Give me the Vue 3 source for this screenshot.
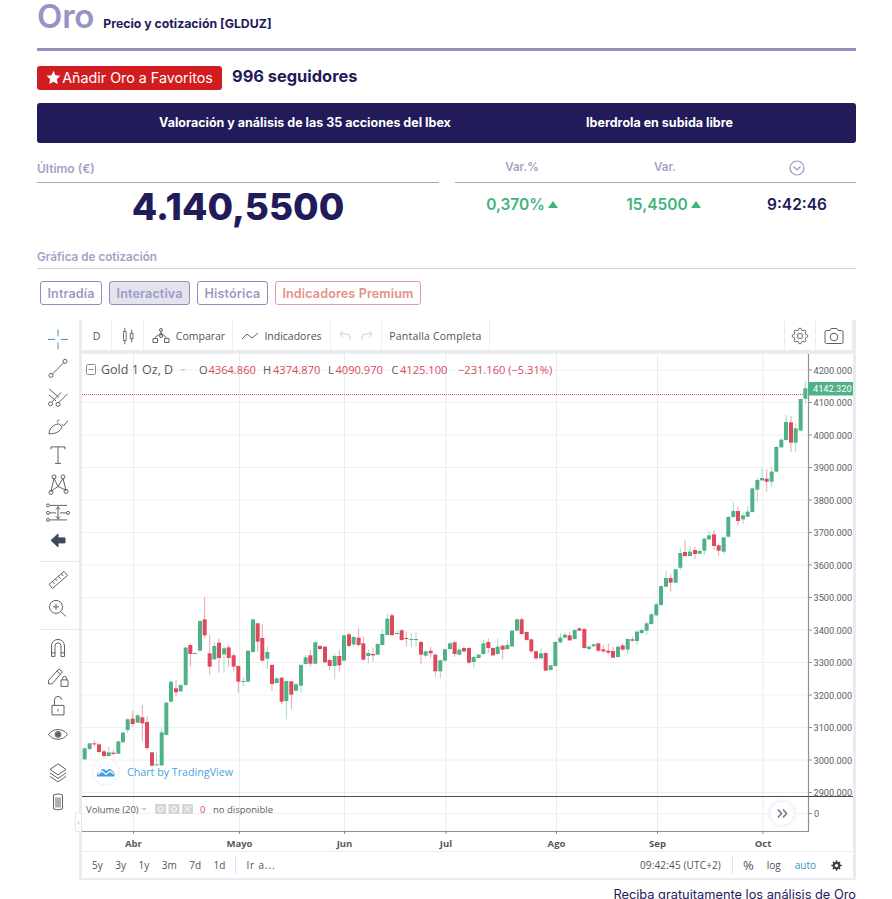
<script setup>
const rowsA = `14 g 475 508 472 510
29 g 460 477 458 480
43 r 460 463 450 470
57 r 463 486 460 490
72 r 484 498 480 505
86 g 487 498 470 500
100 r 488 492 480 495
115 g 454 491 452 492
129 g 428 457 425 460
143 g 388 420 385 430
158 r 386 402 362 410
173 g 376 398 372 400
187 r 382 400 345 455
201 r 396 474 378 480
216 r 487 527 486 530
230 g 523 526 487 527
245 g 427 526 415 528
259 g 338 435 335 436
273 g 275 335 272 338
288 r 295 307 270 318
302 g 285 304 283 306
317 g 173 285 170 288
331 r 165 192 160 230
345 g 189 191 188 192
360 g 93 182 90 185
374 r 88 136 22 145
389 r 190 230 135 255
403 g 168 208 155 210
417 r 158 204 145 248
432 g 175 193 170 248
446 r 172 204 165 232
461 r 196 230 190 245
475 r 228 275 225 308
490 g 273 275 262 290
504 g 182 275 180 276
519 g 88 186 86 188
533 r 100 155 98 185
547 r 144 212 102 215
562 g 186 206 170 236
576 r 225 282 222 303
590 g 265 279 263 281
605 r 263 335 262 342
619 g 273 333 272 388
634 r 274 314 272 358
648 g 283 302 280 304
663 g 225 287 222 308
677 g 202 222 195 224
691 r 196 221 180 230
706 g 157 221 152 224
720 r 168 177 165 180
735 r 170 217 168 220
749 r 210 228 205 240
764 g 198 228 190 268
778 r 198 226 180 245`

const rowsB = `12 g 136 212 134 214
27 r 133 168 128 172
41 g 141 163 139 170
56 r 143 165 115 170
70 r 160 209 140 212
85 g 189 198 178 220
99 r 192 196 172 215
113 g 162 194 158 196
127 g 132 165 118 167
142 g 86 135 72 137
156 r 76 135 70 140
171 g 129 131 122 135
185 r 121 150 118 152
199 r 144 147 125 170
214 g 147 149 130 172
228 g 147 149 126 170
243 r 156 194 152 222
257 g 184 197 180 202
272 r 182 190 170 205
286 r 194 244 190 260
301 g 211 244 208 265
315 g 178 212 175 215
330 g 160 177 155 179
344 r 157 192 152 200
358 g 179 194 176 196
372 r 174 184 170 188
387 r 174 218 172 222
401 g 201 216 198 232
416 g 194 204 192 206
430 g 160 192 150 194
445 r 156 174 145 190
459 r 174 196 172 198
473 g 170 192 145 194
488 r 167 179 165 207
502 g 165 177 150 180
516 g 122 169 120 172
531 g 88 122 86 124
545 r 88 132 82 134
560 r 126 150 124 152
574 r 148 184 146 190
588 r 184 205 182 210
603 g 190 205 175 207
617 r 189 242 187 244
632 g 226 240 224 242
646 g 156 228 154 230
661 g 143 157 130 160
675 g 134 143 128 145
689 r 136 151 125 153
704 g 120 147 118 149
718 r 115 122 112 124
733 r 117 174 115 176
747 g 170 177 165 180
761 g 163 169 160 172
775 r 160 182 158 186`

const rowsC = `10 r 808 814 795 820
25 r 812 818 790 822
39 r 813 833 800 835
54 g 800 831 797 833
68 r 796 809 790 812
83 g 777 809 775 822
97 r 778 782 770 785
111 g 755 783 752 795
125 g 750 759 745 762
140 g 730 752 725 765
154 g 703 732 698 735
169 g 673 706 668 708
183 g 618 675 616 677
198 g 594 620 572 622
212 r 594 608 582 635
227 g 568 608 565 610
241 g 519 563 505 570
255 r 516 528 480 530
270 g 515 528 500 530
285 r 510 522 500 538
299 g 513 521 510 523
313 g 476 512 472 525
327 g 466 478 455 480
342 r 463 498 450 510
356 r 496 512 490 527
371 g 472 515 470 522
385 g 411 470 408 472
400 g 393 411 368 413
414 r 393 423 380 436
429 g 406 418 398 432
443 g 395 410 378 412
457 g 325 396 322 398
472 g 300 329 292 365
486 g 294 301 265 304
500 r 296 305 268 335
515 g 275 305 262 320
529 g 201 275 198 278
544 g 179 202 175 204
558 g 126 180 105 182
573 r 127 188 108 216
587 g 145 188 130 216
602 g 57 152 55 154
616 g 25 56 3 70`

const parse = (x0, y0, rows) =>
  rows.split('\n').map((line) => {
    const [zx, t, bt, bb, wt, wb] = line.trim().split(' ')
    return {
      x: x0 + zx / 3,
      color: t === 'g' ? '#4fb286' : '#dd4a5e',
      top: y0 + bt / 3,
      h: Math.max(1, (bb - bt) / 3),
      wt: y0 + wt / 3,
      wb: y0 + wb / 3,
    }
  })

const candles = [
  ...parse(80, 590, rowsA),
  ...parse(340, 590, rowsB),
  ...parse(600, 380, rowsC),
]

const priceLabels = [4200, 4100, 4000, 3900, 3800, 3700, 3600, 3500, 3400, 3300, 3200, 3100, 3000, 2900].map(
  (p) => ({ y: 370 + (4200 - p) * 0.325, text: p.toFixed(3) })
)
const months = [
  { x: 133.5, t: 'Abr' },
  { x: 239.5, t: 'Mayo' },
  { x: 344.5, t: 'Jun' },
  { x: 446, t: 'Jul' },
  { x: 556.5, t: 'Ago' },
  { x: 657.5, t: 'Sep' },
  { x: 763, t: 'Oct' },
]
const legend = [
  { x: 199, t: 'O', c: '#555' },
  { x: 208.5, t: '4364.860', c: '#d8495e' },
  { x: 263, t: 'H', c: '#555' },
  { x: 273, t: '4374.870', c: '#d8495e' },
  { x: 328, t: 'L', c: '#555' },
  { x: 335.5, t: '4090.970', c: '#d8495e' },
  { x: 391.5, t: 'C', c: '#555' },
  { x: 400, t: '4125.100', c: '#d8495e' },
  { x: 458, t: '−231.160 (−5.31%)', c: '#d8495e' },
]

const gear = (cx, cy, r1, r2, n) => {
  const pts = []
  for (let i = 0; i < n; i++) {
    const a = (i / n) * Math.PI * 2
    const w = Math.PI / n / 1.9
    ;[[a - w * 1.3, r1], [a - w * 0.6, r2], [a + w * 0.6, r2], [a + w * 1.3, r1]].forEach(([an, r]) =>
      pts.push(`${(cx + r * Math.cos(an)).toFixed(2)} ${(cy + r * Math.sin(an)).toFixed(2)}`)
    )
  }
  return 'M' + pts.join('L') + 'Z'
}
const gearLine = gear(12, 12, 6.5, 8.5, 8)
const gearSolid = gear(8, 8, 4.6, 6.4, 8)

const toolGroups = [
  [
    { d: 'M12 2v7M12 15v7M2 12h7M15 12h7', c: '#3e93bd' },
    { d: 'M6.5 17.5L17.5 6.5M7 19a2 2 0 1 1-4 0a2 2 0 1 1 4 0ZM21 5a2 2 0 1 1-4 0a2 2 0 1 1 4 0Z' },
    { d: 'M3 3.5L13 12M3 9.5L10 15.5M6 16.5L15 7M13 17L21.5 8.5M6.5 18.5a2 2 0 1 1-4 0a2 2 0 1 1 4 0ZM14 19a2 2 0 1 1-4 0a2 2 0 1 1 4 0Z' },
    { d: 'M3 20.5C3 15 8 10.5 13 10.5L16 13.5C14.5 18 10 20.5 3 20.5ZM15.5 10.5L17.5 12.5L22 7M11 9L13 6' },
    { d: 'M5 7V4.5H19V7M12 4.5V21M9 21H15' },
    { d: 'M5 20L8 7L12 15L17 7L20 19L12 15L5 20ZM7 21a2 2 0 1 1-4 0a2 2 0 1 1 4 0ZM10 5.500a2 2 0 1 1-4 0a2 2 0 1 1 4 0ZM19 5.500a2 2 0 1 1-4 0a2 2 0 1 1 4 0ZM22 20a2 2 0 1 1-4 0a2 2 0 1 1 4 0Z' },
    { d: 'M4 5H21M4 12.500H10M14 12.500H20M4 19.500H21M12 6V19M10 9L12 6.500L14 9M10 16L12 18.500L14 16M3.500 5a1.500 1.500 0 1 1-3 0a1.500 1.500 0 1 1 3 0ZM3.500 12.500a1.500 1.500 0 1 1-3 0a1.500 1.500 0 1 1 3 0ZM3.500 19.500a1.500 1.500 0 1 1-3 0a1.500 1.500 0 1 1 3 0ZM23.500 12.500a1.500 1.500 0 1 1-3 0a1.500 1.500 0 1 1 3 0Z' },
    { d: 'M5 12L12 5.500V9.500H19V14.500H12V18.500Z', fill: '#3d4a5c', c: '#3d4a5c' },
  ],
  [
    { d: 'M3 17L18 4L21.500 8L6.500 21ZM6.500 14L8.500 16.500M9.500 11.500L11 13.500M12.500 9L14.500 11.500M15.500 6.500L17 8.500' },
    { d: 'M16.500 10.500a6.500 6.500 0 1 1-13 0a6.500 6.500 0 1 1 13 0ZM15 15.500L20 20M10 7.500V13.500M7 10.500H13' },
  ],
  [
    { d: 'M5.500 21V10.500a6.500 6.500 0 0 1 13 0V21H15V10.500a3 3 0 0 0-6 0V21ZM5.500 17.500H9M15 17.500H18.500' },
    { d: 'M2.500 16L13 4.500L16.500 7.500L6 19.500H2.500ZM11 6.500L14.500 10M15 15.500H22V22H15ZM16.500 15.500V14a2 2 0 0 1 4 0v1.500' },
    { d: 'M6 12H18V21.500H6ZM8.500 12V6.500a3.500 3.500 0 0 1 7 0M12 15.500V18' },
    { d: 'M2.500 12C7 5.500 17 5.500 21.500 12C17 18.500 7 18.500 2.500 12ZM15 12a3 3 0 1 1-6 0a3 3 0 1 1 6 0Z', dot: true },
  ],
  [
    { d: 'M12 3.500L20 9L12 14.500L4 9ZM4 12.500L12 18L20 12.500M4 16L12 21.500L20 16' },
    { d: 'M7.500 5.500Q12 3.500 16.500 5.500V19.500Q12 21.500 7.500 19.500ZM10 8V18M12 8V18M14 8V18' },
  ],
]
const ranges = ['5y', '3y', '1y', '3m', '7d', '1d']
</script>

<template>
  <div class="page">
    <header class="title-row">
      <h1 class="title">Oro</h1>
      <h2 class="subtitle">Precio y cotización [GLDUZ]</h2>
    </header>

    <div class="fav-row">
      <button class="fav-btn">
        <svg class="star" viewBox="0 0 16 16" width="15" height="15">
          <path d="M8 .8l2.2 4.700 5.100.7-3.700 3.600.9 5.100L8 12.500l-4.500 2.400.9-5.100L.7 6.200l5.100-.7z" fill="#fff" />
        </svg>
        <span>Añadir Oro a Favoritos</span>
      </button>
      <span class="followers">996 seguidores</span>
    </div>

    <nav class="banner">
      <a>Valoración y análisis de las 35 acciones del Ibex</a>
      <a>Iberdrola en subida libre</a>
    </nav>

    <section class="quote">
      <div class="last">
        <div class="q-head q-last">Último (€)</div>
        <div class="price">4.140,5500</div>
      </div>
      <div class="vars">
        <div class="q-head vars-head">
          <span>Var.%</span>
          <span>Var.</span>
          <svg viewBox="0 0 16 16" width="16" height="16" class="clock">
            <circle cx="8" cy="8" r="7" fill="none" stroke="#9b99c2" stroke-width="1.200" />
            <path d="M4.500 6.500L8 10L11.500 6.500" fill="none" stroke="#9b99c2" stroke-width="1.200" />
          </svg>
        </div>
        <div class="vars-body">
          <span class="up">0,370%<i class="tri"></i></span>
          <span class="up second">15,4500<i class="tri"></i></span>
          <span class="time">9:42:46</span>
        </div>
      </div>
    </section>

    <div class="section-label">Gráfica de cotización</div>

    <div class="tabs">
      <a class="tab">Intradía</a>
      <a class="tab active">Interactiva</a>
      <a class="tab">Histórica</a>
      <a class="tab premium">Indicadores Premium</a>
    </div>

    <div class="widget">
      <aside class="tools">
        <div v-for="(group, g) in toolGroups" :key="g" class="tool-group" :class="'g' + g">
          <svg v-for="(ic, i) in group" :key="i" class="tool" viewBox="0 0 24 24" width="24" height="24">
            <path :d="ic.d" :fill="ic.fill || 'none'" :stroke="ic.c || '#5c6168'" stroke-width="1" />
            <circle v-if="ic.dot" cx="12" cy="12" r="2.500" fill="#5c6168" />
          </svg>
        </div>
      </aside>

      <div class="main">
        <div class="topbar">
          <div class="seg" style="width: 30px">D</div>
          <div class="seg" style="width: 32px">
            <svg viewBox="0 0 24 24" width="22" height="22">
              <path d="M7 7H10V17H7ZM8.500 3V7M8.500 17V21M14.500 9H17.500V15H14.500ZM16 5V9M16 15V19" fill="none" stroke="#5c6168" />
            </svg>
          </div>
          <div class="seg" style="width: 89px">
            <svg viewBox="0 0 20 18" width="20" height="18">
              <path d="M10 3V8M10 6L4 10.500M10 6L15.500 10.500M2 11.500H6.500V15.500H2ZM13.500 11.500H18V15.500H13.500Z" fill="none" stroke="#5c6168" />
              <circle cx="10" cy="3" r="1.500" fill="#fff" stroke="#5c6168" />
              <circle cx="10" cy="9" r="1.500" fill="#fff" stroke="#5c6168" />
            </svg>
            <span class="ml">Comparar</span>
          </div>
          <div class="seg" style="width: 98px">
            <svg viewBox="0 0 18 12" width="18" height="12">
              <path d="M1 9L6 4L11 8L17 3" fill="none" stroke="#5c6168" />
            </svg>
            <span class="ml">Indicadores</span>
          </div>
          <div class="seg undo" style="width: 51px">
            <svg viewBox="0 0 14 14" width="14" height="14">
              <path d="M5 2L2 5L5 8M2 5H8.500A3.500 3.500 0 0 1 12 8.500V11" fill="none" stroke="#c9cdd2" />
            </svg>
            <svg viewBox="0 0 14 14" width="14" height="14">
              <path d="M9 2L12 5L9 8M12 5H5.500A3.500 3.500 0 0 0 2 8.500V11" fill="none" stroke="#c9cdd2" />
            </svg>
          </div>
          <div class="seg full" style="width: 108px">Pantalla Completa</div>
          <div class="spacer"></div>
          <div class="seg right" style="width: 32px">
            <svg viewBox="0 0 24 24" width="22" height="22">
              <path :d="gearLine" fill="none" stroke="#5c6168" />
              <circle cx="12" cy="12" r="2.800" fill="none" stroke="#5c6168" />
            </svg>
          </div>
          <div class="seg" style="width: 37px">
            <svg viewBox="0 0 20 18" width="20" height="18">
              <path d="M2.500 3.500H6L7.200 1.500H12.800L14 3.500H17.500A1.500 1.500 0 0 1 19 5V15A1.500 1.500 0 0 1 17.500 16.500H2.500A1.500 1.500 0 0 1 1 15V5A1.500 1.500 0 0 1 2.500 3.500Z" fill="none" stroke="#5c6168" />
              <circle cx="10" cy="10" r="3.800" fill="none" stroke="#5c6168" />
            </svg>
          </div>
        </div>

        <svg class="chart" viewBox="82 354 771 497" width="771" height="497">
          <g stroke="#eef0f4" stroke-width="1">
            <path v-for="l in priceLabels" :key="l.text" :d="`M82 ${l.y}H808`" />
            <path d="M82 813.500H808" />
          </g>
          <g stroke="#e9ecf0" stroke-width="1">
            <path v-for="m in months" :key="m.t" :d="`M${m.x} 354V831`" />
          </g>

          <line x1="82" x2="808" y1="394.500" y2="394.500" stroke="#e0586c" stroke-width="1" stroke-dasharray="1 1" />

          <g v-for="(c, i) in candles" :key="i">
            <line :x1="c.x" :x2="c.x" :y1="c.wt" :y2="c.wb" :stroke="c.color" stroke-width="1" opacity="0.5" />
            <rect :x="c.x - 2" :y="c.top" width="4" :height="c.h" :fill="c.color" />
          </g>

          <!-- axes -->
          <path d="M808.500 354V831.500H82" fill="none" stroke="#8d9094" stroke-width="1.200" />
          <path d="M82 796.500H853" stroke="#4a4c50" stroke-width="1" />
          <g stroke="#8d9094">
            <path v-for="l in priceLabels" :key="'t' + l.text" :d="`M808 ${l.y}h4`" />
            <path d="M808 813.500h4" />
            <path v-for="m in months" :key="'t' + m.t" :d="`M${m.x} 831v3`" />
          </g>
          <g class="axis-text">
            <text v-for="l in priceLabels" :key="'l' + l.text" x="813.500" :y="l.y + 3.500">{{ l.text }}</text>
            <text x="814" y="817">0</text>
          </g>
          <rect x="808" y="382" width="45" height="13.500" fill="#4fb286" />
          <text x="813" y="392.200" class="axis-text current">4142.320</text>
          <g class="month-text">
            <text v-for="m in months" :key="'m' + m.t" :x="m.x" y="847" text-anchor="middle">{{ m.t }}</text>
          </g>

          <!-- legend -->
          <rect x="86.500" y="364.500" width="9" height="10" rx="1" fill="#fff" stroke="#8a8d92" />
          <path d="M88.500 369.500h5" stroke="#8a8d92" />
          <text x="101" y="373.500" class="legend-title">Gold 1 Oz, D</text>
          <path d="M180 369h6l-3 2z" fill="#c5c8cc" />
          <text v-for="l in legend" :key="l.x" :x="l.x" y="373.500" class="legend" :fill="l.c">{{ l.t }}</text>

          <!-- watermark -->
          <circle cx="105.700" cy="771.700" r="13.500" fill="#fff" stroke="#f1efee" />
          <path d="M97 776.500Q96.500 772.500 100 772Q102 767.500 105 769.800L106.500 771Q109.500 767.500 112 770.500Q115 772 114.500 776.500Z" fill="#3f9fe0" />
          <path d="M98 774.500L102 771L106 774.500L110 771L113.500 774" fill="none" stroke="#fff" stroke-width="1.100" />
          <text x="127" y="775.500" class="brand">Chart by TradingView</text>

          <!-- volume legend -->
          <text x="86" y="812.500" class="vol">Volume (20)</text>
          <path d="M141 808h6l-3 2.500z" fill="#c5c8cc" />
          <g fill="#d4d6d9">
            <rect x="155" y="804" width="11" height="10" />
            <rect x="168.500" y="804" width="11" height="10" />
            <rect x="182" y="804" width="11" height="10" />
          </g>
          <g fill="none" stroke="#fff">
            <circle cx="160.500" cy="809" r="2.500" />
            <circle cx="174" cy="809" r="2.500" />
            <path d="M184.500 806L190.500 812M190.500 806L184.500 812" />
          </g>
          <text x="200" y="813" class="vol" style="fill: #d8495e">0</text>
          <text x="213" y="813" class="vol">no disponible</text>

          <!-- go to realtime -->
          <circle cx="782" cy="813.500" r="12" fill="#fff" stroke="#f0f1f3" style="filter: drop-shadow(0 0 2px #e6e8eb)" />
          <path d="M778 809.500L781.500 813.500L778 817.500M783 809.500L786.500 813.500L783 817.500" fill="none" stroke="#6d7a95" stroke-width="1.600" />
        </svg>

        <div class="botbar">
          <div class="ranges">
            <span v-for="r in ranges" :key="r">{{ r }}</span>
          </div>
          <div class="vsep"></div>
          <span class="goto">Ir a...</span>
          <div class="spacer"></div>
          <span class="clocktext">09:42:45 (UTC+2)</span>
          <div class="vsep sep2"></div>
          <span class="pct">%</span>
          <span class="log">log</span>
          <span class="auto">auto</span>
          <svg viewBox="0 0 16 16" width="13" height="13" class="gearb">
            <path :d="gearSolid" fill="#3c3f44" />
            <circle cx="8" cy="8" r="2" fill="#fff" />
          </svg>
        </div>
      </div>

      <div class="collapse">‹</div>
    </div>

    <p class="footer">Reciba gratuitamente los análisis de Oro</p>
  </div>
</template>

<style>
html,
body {
  margin: 0;
  background: #fff;
  overflow: hidden;
}
</style>

<style scoped>
.page {
  width: 892px;
  height: 899px;
  box-sizing: border-box;
  padding: 0 36px 0 37px;
  overflow: hidden;
  font-family: Inter, "Noto Sans", sans-serif;
  color: #221b5a;
}
.title-row {
  display: flex;
  align-items: baseline;
  gap: 9px;
  height: 48px;
  border-bottom: 3px solid #918fbf;
  box-sizing: content-box;
}
.title {
  margin: 0;
  font-size: 33px;
  line-height: 33px;
  font-weight: 600;
  color: #9694c4;
  letter-spacing: -0.2px;
}
.subtitle {
  margin: 0;
  font-size: 12.3px;
  font-weight: 700;
  color: #221b5a;
}
.fav-row {
  display: flex;
  align-items: center;
  gap: 10px;
  margin-top: 15px;
  height: 24px;
}
.fav-btn {
  display: flex;
  align-items: center;
  justify-content: center;
  gap: 1px;
  width: 185px;
  height: 24px;
  padding: 0 0 2px;
  border: 0;
  border-radius: 3px;
  background: #d11d20;
  color: #fff;
  font: 400 14.3px Inter, sans-serif;
}
.star {
  flex: none;
}
.followers {
  padding-bottom: 4px;
  font-size: 16.4px;
  font-weight: 700;
}
.banner {
  display: grid;
  grid-template-columns: 536px 173px;
  align-items: center;
  box-sizing: border-box;
  height: 40px;
  padding-bottom: 2px;
  margin-top: 13px;
  background: #221b5a;
  border-radius: 3px;
  color: #fff;
  font-size: 12.5px;
  font-weight: 700;
  text-align: center;
}
.quote {
  display: grid;
  grid-template-columns: 402px 401px;
  gap: 16px;
  margin-top: 12px;
}
.q-head {
  box-sizing: border-box;
  height: 28px;
  padding-top: 4px;
  line-height: 17px;
  border-bottom: 1px solid #aaaab4;
  font-size: 11.5px;
  font-weight: 600;
  color: #a3a1c6;
}
.q-last {
  padding-top: 5px;
  font-size: 12px;
}
.price {
  height: 46px;
  line-height: 47px;
  text-align: center;
  font-size: 37px;
  font-weight: 800;
  color: #221b5a;
}
.vars-head,
.vars-body {
  display: grid;
  grid-template-columns: 134px 152px 112px;
  justify-items: center;
  align-items: center;
}
.vars-head {
  align-items: start;
}
.vars-body {
  box-sizing: border-box;
  height: 46px;
  padding-bottom: 4px;
  font-size: 15.5px;
  font-weight: 600;
}
.clock {
  margin-top: 1px;
}
.up {
  display: flex;
  align-items: center;
  gap: 3px;
  color: #3fb57c;
}
.second {
  margin-right: 3px;
}
.tri {
  width: 0;
  height: 0;
  border-left: 5.5px solid transparent;
  border-right: 5.5px solid transparent;
  border-bottom: 7px solid #3fb57c;
}
.time {
  color: #221b5a;
}
.section-label {
  box-sizing: border-box;
  height: 24px;
  margin-top: 16px;
  padding-top: 1px;
  line-height: 23px;
  border-bottom: 1px solid #cfcfd6;
  font-size: 11.7px;
  font-weight: 600;
  color: #a3a1c6;
}
.tabs {
  display: flex;
  gap: 7px;
  margin: 12px 0 0 3px;
}
.tab {
  box-sizing: border-box;
  height: 24px;
  line-height: 23px;
  padding: 0 6.5px;
  border: 1px solid #8f8dbd;
  border-radius: 3px;
  font-size: 12.6px;
  letter-spacing: 0.12px;
  font-weight: 600;
  color: #9c9ac4;
}
.tab.active {
  background: #e3e3ee;
}
.tab.premium {
  border-color: #e2a09a;
  color: #e58f88;
}
.widget {
  position: relative;
  display: flex;
  width: 816px;
  height: 560px;
  margin: 15px 0 0 3px;
}
.tools {
  flex: none;
  box-sizing: border-box;
  width: 39px;
}
.tool-group {
  display: flex;
  flex-direction: column;
  align-items: center;
}
.tool {
  display: block;
  box-sizing: content-box;
  padding: 2.4px 3px 2.4px 0;
}
.g0 {
  padding: 5px 0 5.3px;
  border-bottom: 1px solid #e8eaee;
}
.g1 {
  padding: 3.5px 0 6.2px;
  border-bottom: 1px solid #e8eaee;
}
.g2 {
  padding-top: 3.5px;
}
.g3 {
  padding-top: 10px;
}
.main {
  flex: none;
  display: flex;
  flex-direction: column;
  width: 771px;
  border-left: 3px solid #e8ebef;
  border-right: 3px solid #e8ebef;
  border-bottom: 2px solid #e8ebef;
  font-family: "Open Sans", "Noto Sans", sans-serif;
  color: #4e5359;
  font-size: 10.5px;
}
.topbar {
  flex: none;
  display: flex;
  height: 30px;
  border-bottom: 4px solid #e8ebef;
}
.seg {
  flex: none;
  box-sizing: border-box;
  display: flex;
  align-items: center;
  justify-content: center;
  padding-top: 1px;
  border-right: 1px solid #eceef1;
}
.seg.right {
  border-left: 1px solid #eceef1;
}
.seg.undo {
  gap: 8px;
}
.seg.full {
  letter-spacing: 0.18px;
}
.ml {
  margin-left: 5px;
}
.spacer {
  flex: 1;
}
.chart {
  display: block;
  flex: none;
}
.axis-text text,
.axis-text {
  font-family: Roboto, sans-serif;
  font-size: 9.2px;
  fill: #5a5e63;
}
.axis-text.current {
  fill: #fff;
}
.month-text text {
  font-family: "Open Sans", sans-serif;
  font-size: 9.5px;
  font-weight: 700;
  fill: #555a60;
}
.legend-title {
  font-family: "Open Sans", sans-serif;
  font-size: 12.5px;
  fill: #555a60;
}
.legend {
  font-family: "Open Sans", sans-serif;
  font-size: 11.1px;
}
.brand {
  font-family: "Open Sans", sans-serif;
  font-size: 10.7px;
  fill: #4ba3de;
}
.vol {
  font-family: "Open Sans", sans-serif;
  font-size: 9.5px;
  fill: #5a5e63;
}
.botbar {
  flex: none;
  display: flex;
  align-items: center;
  height: 27px;
  box-sizing: border-box;
  border-top: 1px solid #eceef1;
  padding-left: 10px;
  font-size: 10px;
}
.ranges {
  display: flex;
  gap: 12.5px;
}
.vsep {
  width: 1px;
  height: 18px;
  margin-left: 10px;
  background: #e3e5e9;
}
.goto {
  margin-left: 10px;
  letter-spacing: 0.9px;
}
.clocktext {
  margin-right: 11px;
  letter-spacing: 0.15px;
}
.sep2 {
  margin-left: 0;
}
.pct {
  margin-left: 10px;
  font-size: 13px;
}
.log {
  margin-left: 13px;
}
.auto {
  margin-left: 14px;
  color: #3a8fb7;
}
.gearb {
  margin: 0 10px 0 14px;
}
.collapse {
  position: absolute;
  left: 35px;
  top: 492px;
  box-sizing: border-box;
  width: 7px;
  height: 20px;
  background: #fff;
  border: 1px solid #e4e6ea;
  border-radius: 2px;
  font: 9px/18px "Open Sans", sans-serif;
  text-align: center;
  color: #b5b8bd;
}
.footer {
  margin: 7px 0 0;
  line-height: 16px;
  text-align: right;
  font-size: 12.8px;
  color: #221b5a;
}
</style>
